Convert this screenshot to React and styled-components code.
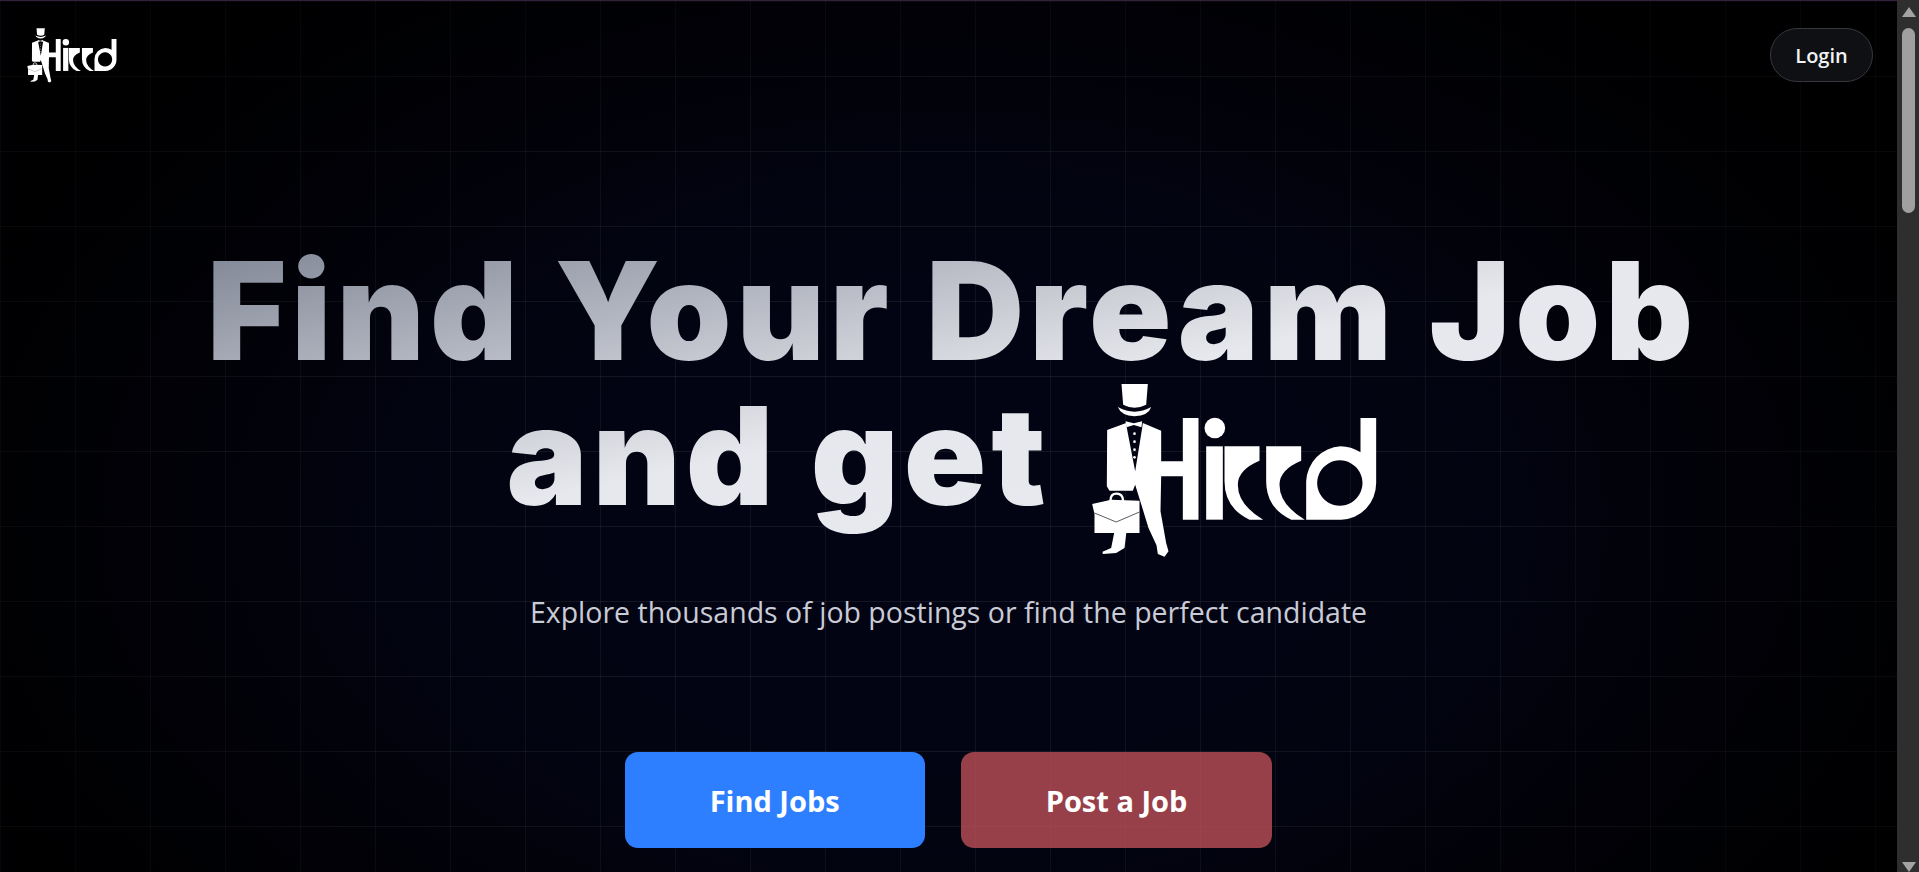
import React from "react";
import styled, { createGlobalStyle } from "styled-components";

const GlobalStyle = createGlobalStyle`
  * { box-sizing: border-box; }
  html, body { margin: 0; padding: 0; height: 100%; overflow: hidden; background: #000; }
  body { font-family: "Open Sans", "Noto Sans", sans-serif; color: #fff; }
`;

const Logo = ({ className }) => (
  <svg className={className} viewBox="90 35 860 525" fill="#fff" aria-label="Hiccd logo">
    {/* hat */}
    <path d="M181 38H260L255 100Q220 118 186 100Z" />
    <path d="M170 107Q220 135 270 107Q262 133 220 135Q180 133 170 107Z" />
    {/* bow tie */}
    <path d="M193 150L218 156L243 150L241 168L218 161L196 168Z" />
    {/* jacket, right leg and the H */}
    <path
      fillRule="evenodd"
      d="M195 155L138 176L137 345L145 358L215 358L222 340L236 385L262 470L286 522L290 548L310 556L322 540L315 515L298 420L300 315H365V445H412V140H365V270H300V178L245 155L243 170L222 300L197 170Z"
    />
    <circle cx="220" cy="187" r="4" />
    <circle cx="220" cy="211" r="4" />
    <circle cx="220" cy="235" r="4" />
    <circle cx="220" cy="258" r="4" />
    {/* left leg */}
    <path d="M160 480H196L190 530L165 545L125 548L124 541L150 530Z" />
    {/* briefcase */}
    <path d="M148 388Q148 367 166 367Q186 367 186 390" fill="none" stroke="#fff" strokeWidth="7" />
    <path d="M93 398L150 385L235 388V485H100V428Z" />
    <path d="M100 425L165 452L235 422" fill="none" stroke="#5a5c66" strokeWidth="3" />
    {/* i */}
    <rect x="435" y="225" width="50" height="220" />
    <circle cx="461" cy="170" r="31" />
    {/* the two c's */}
    <path d="M490 225H595V268Q530 295 530 340Q530 400 606 445H565Q490 410 490 330Z" />
    <path d="M615 225H720V268Q655 295 655 340Q655 400 731 445H690Q615 410 615 330Z" />
    {/* d */}
    <path
      fillRule="evenodd"
      d="M945 140H898V243Q870 225 838 225A108 110 0 0 0 735 330V445H840A106 110 0 0 0 945 335ZM836 267A68 68 0 1 1 835.9 267Z"
    />
  </svg>
);

const Window = styled.div`
  display: flex;
  width: 100vw;
  height: 100vh;
  overflow: hidden;
`;

const Page = styled.main`
  flex: 1;
  min-width: 0;
  height: 100%;
  overflow: hidden;
  border-top: 1px solid #33203a;
  background-color: #000;
  background-image:
    radial-gradient(ellipse 55% 75% at 50% 60%, transparent 35%, rgba(0, 0, 0, 0.55) 100%),
    linear-gradient(rgba(255, 255, 255, 0.07) 1px, transparent 1px),
    linear-gradient(90deg, rgba(255, 255, 255, 0.055) 1px, transparent 1px),
    radial-gradient(ellipse 55% 75% at 50% 60%, #020414 0%, #020412 55%, #000003 100%);
  background-size: 100% 100%, 75px 75px, 75px 75px, 100% 100%;
`;

const Nav = styled.nav`
  display: flex;
  justify-content: space-between;
  align-items: flex-start;
  padding: 27px 24px 0 27px;
`;

const NavLogo = styled(Logo)`
  display: block;
  width: 90px;
  height: 55px;
`;

const LoginButton = styled.button`
  width: 103px;
  height: 54px;
  border: 1px solid #36383c;
  border-radius: 27px;
  background: #0e1013;
  color: #f2f3f5;
  font: 600 20px "Open Sans", "Noto Sans", sans-serif;
`;

const Hero = styled.section`
  display: flex;
  flex-direction: column;
  align-items: center;
  margin-top: 155px;
`;

/* the bottom padding keeps the descender of the g inside the clipped gradient */
const Title = styled.h1`
  margin: 0;
  padding: 0 0 30px;
  font: 900 136px/145px "Inter", "Liberation Sans", sans-serif;
  font-optical-sizing: none;
  letter-spacing: 5px;
  text-align: center;
  color: transparent;
  background: linear-gradient(to bottom right, #7d8393 0%, #e7e8ed 52%, #e9eaef 100%);
  -webkit-background-clip: text;
  background-clip: text;
`;

const TitleLine = styled.span`
  display: flex;
  justify-content: center;
  align-items: center;
  height: 145px;
  padding: ${(p) => p.$pad};
  white-space: nowrap;
`;

const TitleLogo = styled(Logo)`
  width: 287px;
  height: 175px;
  margin: 30px 0 0 40px;
  flex: none;
`;

const Subtitle = styled.p`
  margin: 35px 0 0;
  font: 400 28.5px/38px "Open Sans", "Noto Sans", sans-serif;
  color: #c9cbd5;
`;

const Actions = styled.div`
  display: flex;
  gap: 36px;
  margin-top: 121px;
`;

const ActionButton = styled.button`
  height: 96px;
  padding: 0 85px;
  border: 0;
  border-radius: 13px;
  background: ${(p) => p.$bg};
  color: #fff;
  font: 700 29px "Open Sans", "Noto Sans", sans-serif;
`;

const Scrollbar = styled.div`
  flex: none;
  display: flex;
  flex-direction: column;
  align-items: flex-start;
  width: 22px;
  height: 100%;
  padding-left: 5px;
  background: #2e2e2e;
`;

const Arrow = styled.div`
  flex: none;
  width: 0;
  height: 0;
  margin: ${(p) => (p.$down ? "auto 0 0" : "7px 0 0")};
  border-left: 7px solid transparent;
  border-right: 7px solid transparent;
  ${(p) => (p.$down ? "border-top" : "border-bottom")}: 10px solid #a3a3a3;
`;

const Thumb = styled.div`
  flex: none;
  width: 13px;
  height: 185px;
  margin-top: 11px;
  border-radius: 7px;
  background: #a0a0a0;
`;

export default function App() {
  return (
    <Window>
      <GlobalStyle />
      <Page>
        <Nav>
          <NavLogo />
          <LoginButton>Login</LoginButton>
        </Nav>
        <Hero>
          <Title>
            <TitleLine $pad="0 0 0 8px">Find Your Dream Job</TitleLine>
            <TitleLine $pad="0 13px 0 0">
              and get
              <TitleLogo />
            </TitleLine>
          </Title>
          <Subtitle>Explore thousands of job postings or find the perfect candidate</Subtitle>
          <Actions>
            <ActionButton $bg="#2d7fff">Find Jobs</ActionButton>
            <ActionButton $bg="rgba(190, 80, 88, 0.8)">Post a Job</ActionButton>
          </Actions>
        </Hero>
      </Page>
      <Scrollbar>
        <Arrow />
        <Thumb />
        <Arrow $down />
      </Scrollbar>
    </Window>
  );
}
